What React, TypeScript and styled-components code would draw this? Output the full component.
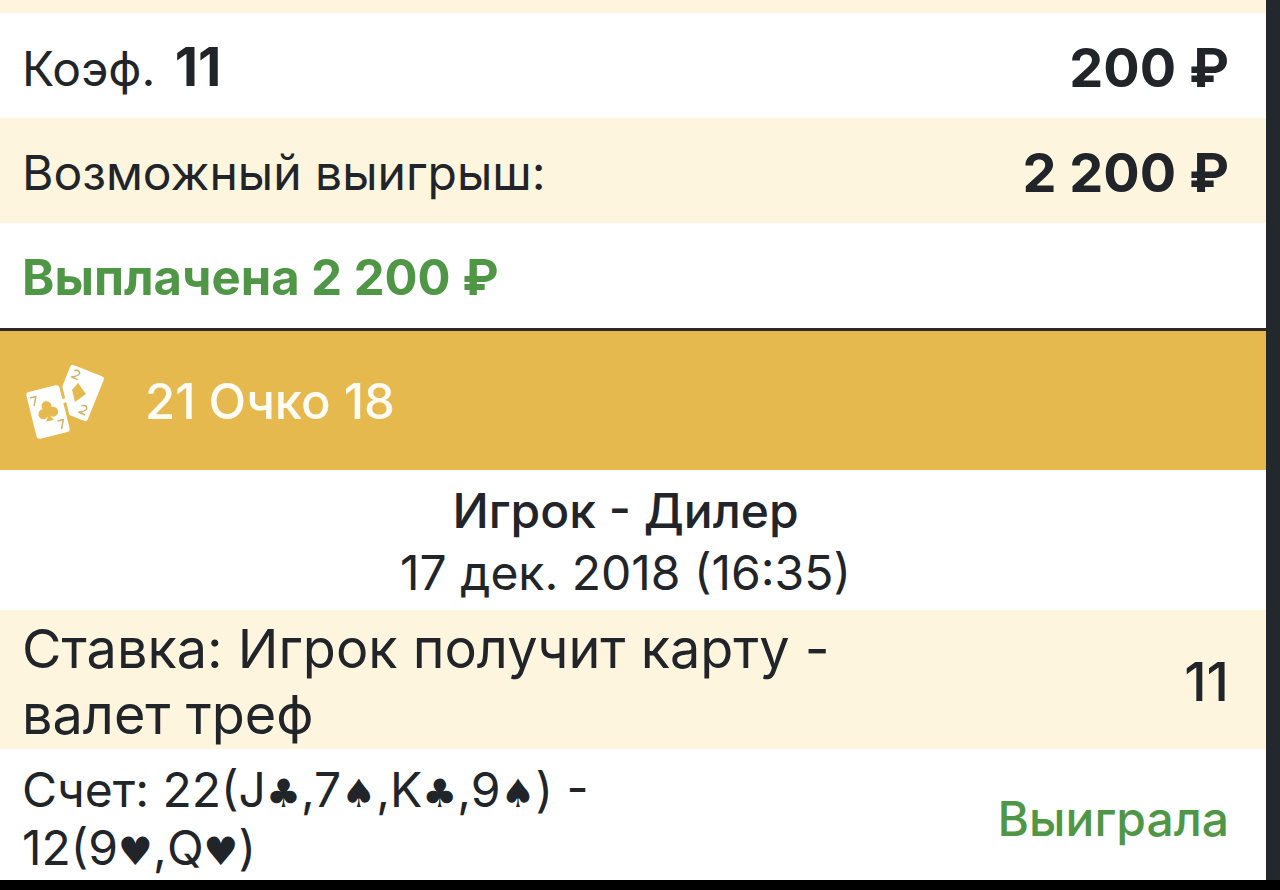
import React from 'react';
import styled, { createGlobalStyle } from 'styled-components';

const ink = '#212529';
const cream = '#fdf5de';
const green = '#4f9646';
const gold = '#e6b94f';

const GlobalStyle = createGlobalStyle`
  *, *::before, *::after { box-sizing: border-box; }
  html { background: #000; }
  body {
    margin: 0;
    color: ${ink};
    font-family: Inter, "Liberation Sans", sans-serif;
    font-size: 48px;
    line-height: 60px;
  }
`;

const Page = styled.div`
  background: #22282c;
  padding-right: 14px;
`;

const Slip = styled.main`
  background: #fff;
`;

const TopStrip = styled.div`
  height: 13px;
  background: ${cream};
`;

const Row = styled.div<{ $tinted?: boolean; $tall?: boolean }>`
  display: flex;
  align-items: center;
  justify-content: space-between;
  gap: 24px;
  min-height: ${(p) => (p.$tall ? 139 : 105)}px;
  padding: 4px 37px 0 22px;
  background: ${(p) => (p.$tinted ? cream : '#fff')};
`;

const Amount = styled.strong`
  font-size: 54px;
  font-weight: 700;
  white-space: nowrap;
`;

const Odds = styled(Amount)`
  margin-left: 6px;
`;

const Paid = styled.strong`
  color: ${green};
  font-size: 49px;
  font-weight: 700;
`;

const GameHeader = styled.header`
  display: flex;
  align-items: center;
  gap: 40px;
  min-height: 142px;
  padding: 2px 24px 0;
  border-top: 3px solid #2b2926;
  background: ${gold};
  color: #fffdf5;
`;

const GameTitle = styled.h2`
  margin: 0;
  font-size: 49px;
  font-weight: 500;
`;

const CardsIcon = styled.svg`
  display: block;
  flex: none;
  width: 81px;
  height: 76px;
`;

const Event = styled.div`
  padding: 10px 37px 6px 22px;
  line-height: 62px;
  text-align: center;
`;

const Players = styled.h3`
  margin: 0;
  font-size: 48px;
  font-weight: 500;
`;

const EventTime = styled.time`
  display: block;
`;

const BetText = styled.p`
  margin: 0;
  max-width: 860px;
  font-size: 54px;
  line-height: 66px;
`;

const BetOdds = styled.span`
  font-size: 54px;
  font-weight: 500;
`;

const Score = styled.p`
  margin: 0;
  max-width: 620px;
  line-height: 58px;
`;

const Suit = styled.span`
  font-family: "DejaVu Sans", sans-serif;
  font-size: 39px;
  line-height: 1;
`;

const Result = styled.span`
  color: ${green};
  font-weight: 500;
`;

const ScoreRow = styled(Row)`
  min-height: 131px;
  padding-top: 8px;
`;

const BottomBar = styled.footer`
  height: 10px;
  background: #000;
`;

function PlayingCards() {
  return (
    <CardsIcon viewBox="0 0 81 76" aria-hidden="true">
      <g fill="none" stroke="#d0b36a" strokeWidth="1.5" strokeLinejoin="round">
        <g transform="translate(55 29) rotate(22)">
          <rect x="-18" y="-24" width="36" height="48" rx="3" fill="#fff" stroke="none" />
          <path d="M-13-19q4-3 6 0 1 3-6 7h7M7 11q4-3 6 0 1 3-6 7h7" />
        </g>
        <path d="M54 19 62 30 51 38 48 26Z" fill={gold} stroke="none" />
        <g transform="translate(24 48) rotate(-14)">
          <rect x="-18" y="-26" width="38" height="52" rx="4" fill={gold} stroke="none" />
          <rect x="-17" y="-24" width="34" height="48" rx="3" fill="#fff" stroke="none" />
          <g fill={gold} stroke="none">
            <circle cy="-6" r="5" />
            <circle cx="-5" cy="1" r="5" />
            <circle cx="5" cy="1" r="5" />
            <path d="M-2-5h4l-1 9 3 5h-8l3-5Z" />
          </g>
          <path d="M-14-18h6l-4 9M7 11h6l-4 9" />
        </g>
        <path d="M36 38l6-2" stroke="#fff" strokeWidth="4" />
      </g>
    </CardsIcon>
  );
}

export default function App() {
  return (
    <>
      <GlobalStyle />
      <Page>
        <Slip>
          <TopStrip />
          <Row>
            <span>
              Коэф. <Odds>11</Odds>
            </span>
            <Amount>200 ₽</Amount>
          </Row>
          <Row $tinted>
            <span>Возможный выигрыш:</span>
            <Amount>2 200 ₽</Amount>
          </Row>
          <Row>
            <Paid>Выплачена 2 200 ₽</Paid>
          </Row>
          <GameHeader>
            <PlayingCards />
            <GameTitle>21 Очко 18</GameTitle>
          </GameHeader>
          <Event>
            <Players>Игрок - Дилер</Players>
            <EventTime dateTime="2018-12-17T16:35">17 дек. 2018 (16:35)</EventTime>
          </Event>
          <Row $tinted $tall>
            <BetText>Ставка: Игрок получит карту - валет треф</BetText>
            <BetOdds>11</BetOdds>
          </Row>
          <ScoreRow>
            <Score>
              Счет: 22(J<Suit>♣</Suit>,7<Suit>♠</Suit>,K<Suit>♣</Suit>,9<Suit>♠</Suit>) -{' '}
              12(9<Suit>♥</Suit>,Q<Suit>♥</Suit>)
            </Score>
            <Result>Выиграла</Result>
          </ScoreRow>
        </Slip>
      </Page>
      <BottomBar />
    </>
  );
}
